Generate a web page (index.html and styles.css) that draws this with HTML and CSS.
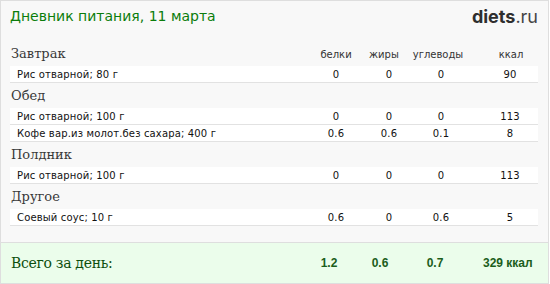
FILE: index.html
```html
<!DOCTYPE html>
<html lang="ru">
<head>
<meta charset="utf-8">
<title>Дневник питания</title>
<link rel="stylesheet" href="styles.css">
</head>
<body>
<div class="card">
  <div class="top">
    <div class="title">Дневник питания, 11 марта</div>
    <div class="logo"><b>diets</b>.ru</div>
  </div>
  <div class="body">
    <div class="sec-head">
      <div class="sec-name">Завтрак</div>
      <div class="cols"><span>белки</span><span>жиры</span><span>углеводы</span><span class="kc">ккал</span></div>
    </div>
    <div class="row"><span class="name">Рис отварной; 80 г</span><span>0</span><span>0</span><span>0</span><span class="kc">90</span></div>

    <div class="sec-head"><div class="sec-name">Обед</div></div>
    <div class="row"><span class="name">Рис отварной; 100 г</span><span>0</span><span>0</span><span>0</span><span class="kc">113</span></div>
    <div class="row"><span class="name">Кофе вар.из молот.без сахара; 400 г</span><span>0.6</span><span>0.6</span><span>0.1</span><span class="kc">8</span></div>

    <div class="sec-head"><div class="sec-name">Полдник</div></div>
    <div class="row"><span class="name">Рис отварной; 100 г</span><span>0</span><span>0</span><span>0</span><span class="kc">113</span></div>

    <div class="sec-head"><div class="sec-name">Другое</div></div>
    <div class="row"><span class="name">Соевый соус; 10 г</span><span>0.6</span><span>0</span><span>0.6</span><span class="kc">5</span></div>
  </div>
  <div class="total">
    <span class="total-label">Всего за день:</span>
    <span>1.2</span><span>0.6</span><span>0.7</span><span class="kc">329 ккал</span>
  </div>
</div>
</body>
</html>
```
FILE: styles.css
```css
* { box-sizing: border-box; }
body { margin: 0; background: #fff; }
.card {
  width: 549px;
  height: 284px;
  border: 1px solid #dedede;
  background: #f8f8f8;
  display: flex;
  flex-direction: column;
}
.top {
  height: 40px;
  display: flex;
  justify-content: space-between;
  align-items: flex-start;
  padding: 4px 10px 0 9px;
}
.title {
  font-family: "DejaVu Sans", Verdana, sans-serif;
  font-size: 14px;
  line-height: 22px;
  color: #0b7d0b;
}
.logo {
  font-family: Inter, "Open Sans", sans-serif;
  font-size: 18px;
  line-height: 22px;
  color: #444;
  margin-top: 1px;
}
.logo b { color: #2e2e2e; font-weight: 700; }
.body { padding: 0 10px 0 9px; }
.sec-head {
  height: 25px;
  display: grid;
  grid-template-columns: 1fr 226px;
  align-items: end;
}
.sec-name {
  font-family: "DejaVu Serif", Georgia, serif;
  font-size: 13px;
  line-height: 20px;
  color: #383838;
  padding-left: 1px;
  padding-bottom: 2px;
}
.cols {
  display: grid;
  grid-template-columns: 48px 48px 60px 70px;
  font-family: "DejaVu Sans", Verdana, sans-serif;
  font-size: 10px;
  color: #333;
  text-align: center;
  line-height: 14px;
  padding-bottom: 4px;
}
.cols .kc { padding-left: 16px; }
.row {
  height: 17px;
  background: #fff;
  border-bottom: 1px solid #e2e2e2;
  display: grid;
  grid-template-columns: 1fr 52px 54px 50px 72px;
  align-items: center;
  font-family: "DejaVu Sans", Verdana, sans-serif;
  font-size: 10px;
  letter-spacing: 0.15px;
  color: #111;
  text-align: center;
}
.row .name { text-align: left; padding-left: 7px; }
.row .kc { padding-left: 16px; }
.total {
  margin-top: auto;
  height: 41px;
  border-top: 1px solid #dedede;
  background: #ebfdeb;
  display: grid;
  grid-template-columns: 1fr 52px 50px 60px 82px;
  align-items: center;
  padding: 0 1px 0 10px;
  font-family: "Liberation Sans", Arial, sans-serif;
  font-weight: 700;
  font-size: 12px;
  color: #1b5e1b;
  text-align: center;
}
.total-label {
  font-family: "DejaVu Serif", Georgia, serif;
  font-weight: 400;
  font-size: 14px;
  color: #0d4f0d;
  text-align: left;
  letter-spacing: -0.3px;
}
.total .kc { padding-left: 18px; text-align: left; }
```
